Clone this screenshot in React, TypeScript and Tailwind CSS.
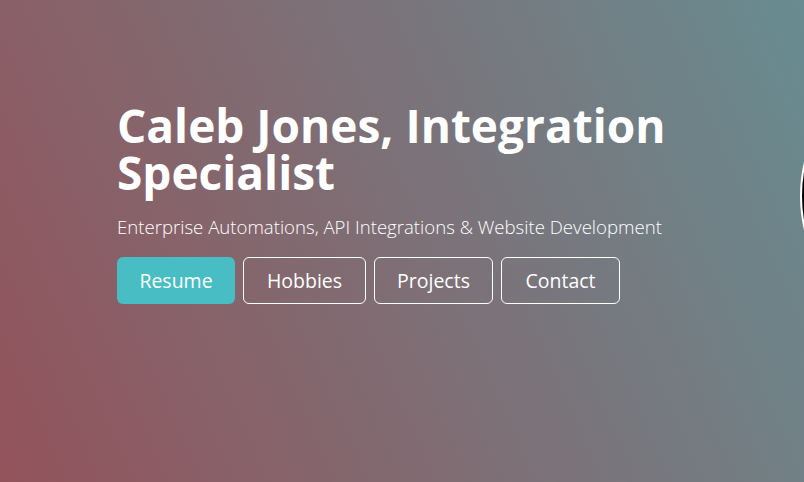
export default function App() {
  return (
    <div className="relative h-[482px] w-[804px] overflow-hidden bg-[linear-gradient(66deg,#93535b,#688c91)] font-['Segoe_UI','Open_Sans',sans-serif] text-white">
      {/* profile picture peeking in at the right edge */}
      <div className="absolute left-[800px] top-[46px] h-[300px] w-[300px] rounded-full border-2 border-white bg-black" />

      <div className="pl-[117px] pt-[102px]">
        <h1 className="text-[46px] font-bold leading-[47px]">
          Caleb Jones, Integration
          <br />
          Specialist
        </h1>
        <p className="mt-[17px] text-[18.6px] font-light">
          Enterprise Automations, API Integrations &amp; Website Development
        </p>
        <div className="mt-[16px] flex gap-2">
          <button className="h-[47px] w-[118px] rounded-md bg-[#48bdc4] text-[19.5px]">Resume</button>
          <button className="h-[47px] w-[123px] rounded-md border border-white text-[19.5px]">Hobbies</button>
          <button className="h-[47px] w-[119px] rounded-md border border-white text-[19.5px]">Projects</button>
          <button className="h-[47px] w-[119px] rounded-md border border-white text-[19.5px]">Contact</button>
        </div>
      </div>
    </div>
  )
}
